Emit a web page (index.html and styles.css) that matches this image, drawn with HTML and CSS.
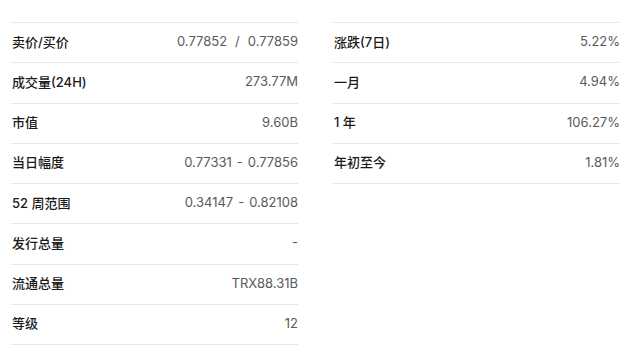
FILE: index.html
```html
<!DOCTYPE html>
<html lang="zh">
<head>
<meta charset="utf-8">
<link rel="stylesheet" href="styles.css">
</head>
<body>
<div class="stats">
  <div class="col">
    <div class="row"><span class="label">卖价/买价</span><span class="value">0.77852<span class="sep">/</span>0.77859</span></div>
    <div class="row"><span class="label">成交量(24H)</span><span class="value">273.77M</span></div>
    <div class="row"><span class="label">市值</span><span class="value">9.60B</span></div>
    <div class="row"><span class="label">当日幅度</span><span class="value">0.77331<span class="dash">-</span>0.77856</span></div>
    <div class="row"><span class="label">52 周范围</span><span class="value">0.34147<span class="dash">-</span>0.82108</span></div>
    <div class="row"><span class="label">发行总量</span><span class="value">-</span></div>
    <div class="row"><span class="label">流通总量</span><span class="value">TRX88.31B</span></div>
    <div class="row"><span class="label">等级</span><span class="value">12</span></div>
  </div>
  <div class="col">
    <div class="row"><span class="label">涨跌(7日)</span><span class="value">5.22%</span></div>
    <div class="row"><span class="label">一月</span><span class="value">4.94%</span></div>
    <div class="row"><span class="label">1 年</span><span class="value">106.27%</span></div>
    <div class="row"><span class="label">年初至今</span><span class="value">1.81%</span></div>
  </div>
</div>
</body>
</html>
```
FILE: styles.css
```css
html, body {
  margin: 0;
  padding: 0;
  background: #ffffff;
}
body {
  font-family: Inter, "Noto Sans CJK SC", sans-serif;
  font-size: 13px;
}
.stats {
  display: flex;
  align-items: flex-start;
  gap: 35px;
  padding: 22px 0 0 11px;
}
.col {
  width: 287px;
  border-top: 1px solid #e6e6e6;
}
.row {
  display: flex;
  justify-content: space-between;
  align-items: center;
  height: 36.25px;
  padding-bottom: 3px;
  border-bottom: 1px solid #e6e6e6;
}
.label {
  color: #1a1a1a;
  font-weight: 500;
  padding-left: 1px;
}
.value {
  color: #5a5a5a;
  font-weight: 400;
}
.sep {
  margin: 0 8px;
}
.dash {
  margin: 0 5px;
}
```
